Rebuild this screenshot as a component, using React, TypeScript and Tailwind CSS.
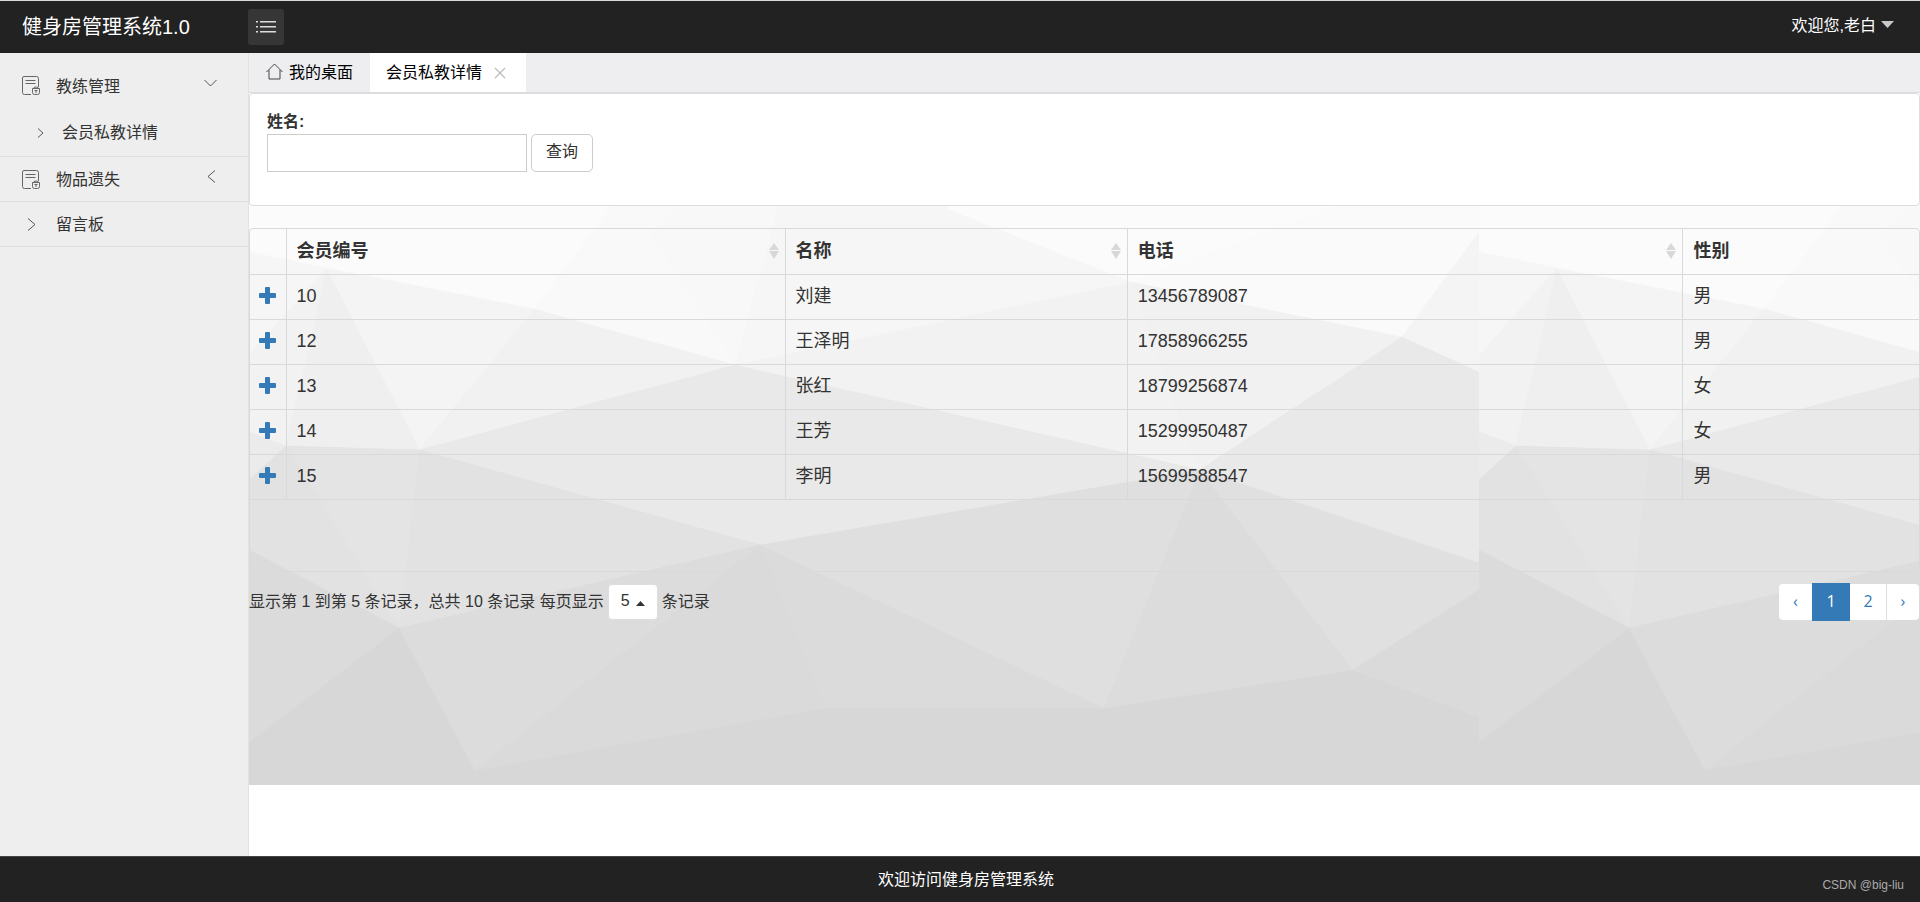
import { useState } from "react";

type Member = {
  id: number;
  name: string;
  phone: string;
  gender: string;
};

const members: Member[] = [
  { id: 10, name: "刘建", phone: "13456789087", gender: "男" },
  { id: 12, name: "王泽明", phone: "17858966255", gender: "男" },
  { id: 13, name: "张红", phone: "18799256874", gender: "女" },
  { id: 14, name: "王芳", phone: "15299950487", gender: "女" },
  { id: 15, name: "李明", phone: "15699588547", gender: "男" },
];

export default function App() {
  const [name, setName] = useState("");
  const [pageSize, setPageSize] = useState("5");

  return (
    <div className="flex min-h-screen flex-col bg-white font-['Liberation_Sans','Noto_Sans_CJK_SC',sans-serif] text-base leading-6 text-[#333]">
      <header className="flex h-[53px] items-center border-t border-[#d5dcd9] bg-[#222] text-white">
        <h1 className="w-[248px] shrink-0 pl-[22px] text-xl">健身房管理系统1.0</h1>
        <button
          aria-label="切换菜单"
          className="flex size-9 items-center justify-center rounded-[3px] bg-[#363636]"
        >
          <svg width="20" height="12" viewBox="0 0 20 12" fill="#ddd">
            <path d="M0 0h2v1.5H0zM4 0h16v1.5H4zM0 5h2v1.5H0zM4 5h16v1.5H4zM0 10h2v1.5H0zM4 10h16v1.5H4z" />
          </svg>
        </button>
        <button className="mr-[26px] ml-auto flex items-center gap-[5px] pb-0.5">
          欢迎您,老白
          <svg width="13" height="7" viewBox="0 0 13 7" className="mb-1" fill="#c8c8c8">
            <path d="M0 0h13L6.500 7z" />
          </svg>
        </button>
      </header>

      <div className="flex flex-1">
        <Sidebar />

        <main className="relative flex min-w-0 flex-1 flex-col">
          <Backdrop />

          <div className="relative flex h-10 shrink-0 border-b border-[#ddd] bg-[#eeeef0] text-black">
            <a href="#home" className="flex items-center gap-1.5 px-[17px]">
              <svg width="17" height="17" viewBox="0 0 17 17" className="mb-0.5" fill="none" stroke="#444">
                <path d="M0.500 9L8.500 1l8 8M3 7v9h11V7" />
              </svg>
              <span>我的桌面</span>
            </a>
            <div className="flex items-center gap-3 bg-white pr-5 pl-4">
              <a href="#private">会员私教详情</a>
              <button aria-label="关闭">
                <svg width="12" height="12" viewBox="0 0 12 12" stroke="#bbb" strokeWidth="1.200">
                  <path d="M1 1l10 10M11 1L1 11" />
                </svg>
              </button>
            </div>
          </div>

          <form
            className="relative rounded border border-[#ddd] bg-white px-[17px] pt-4 pb-[33px]"
            onSubmit={(e) => e.preventDefault()}
          >
            <label htmlFor="name" className="block font-bold">
              姓名:
            </label>
            <div className="flex gap-1">
              <input
                id="name"
                value={name}
                onChange={(e) => setName(e.target.value)}
                className="h-[38px] w-[260px] border border-[#ccc] bg-white px-2 outline-none"
              />
              <button className="h-[38px] rounded-[5px] border border-[#ccc] bg-white px-3.5 pb-0.5">
                查询
              </button>
            </div>
          </form>

          <div className="relative mt-[22px] rounded border border-[#d9d9d9] pb-[71px] text-lg">
            <table className="w-full table-fixed border-collapse">
              <colgroup>
                <col className="w-9" />
                <col className="w-[29.900%]" />
                <col className="w-[20.500%]" />
                <col className="w-[33.300%]" />
                <col />
              </colgroup>
              <thead>
                <tr className="h-[45px] border-b border-[#d9d9d9]">
                  <th className="border-r border-[#d9d9d9]" />
                  <HeadCell title="会员编号" sortable />
                  <HeadCell title="名称" sortable />
                  <HeadCell title="电话" sortable />
                  <HeadCell title="性别" />
                </tr>
              </thead>
              <tbody>
                {members.map((m) => (
                  <tr key={m.id} className="h-[45px] border-b border-[#d9d9d9]">
                    <td className="border-r border-[#d9d9d9] pb-0.5">
                      <button aria-label="展开" className="mx-auto block">
                        <svg width="17" height="17" viewBox="0 0 17 17" fill="#337ab7">
                          <path d="M7 0h3q1 0 1 1v5h5q1 0 1 1v3q0 1-1 1h-5v5q0 1-1 1H7q-1 0-1-1v-5H1q-1 0-1-1V7q0-1 1-1h5V1q0-1 1-1z" />
                        </svg>
                      </button>
                    </td>
                    <td className="border-r border-[#d9d9d9] px-2.5 pb-0.5">{m.id}</td>
                    <td className="border-r border-[#d9d9d9] px-2.5 pb-0.5">{m.name}</td>
                    <td className="border-r border-[#d9d9d9] px-2.5 pb-0.5">{m.phone}</td>
                    <td className="px-2.5 pb-0.5">{m.gender}</td>
                  </tr>
                ))}
              </tbody>
            </table>
          </div>

          <div className="relative mt-[11px] flex items-center justify-between">
            <div className="flex items-center">
              <span className="whitespace-pre">显示第 1 到第 5 条记录，总共 10 条记录 </span>
              <label htmlFor="page-size">每页显示</label>
              <span className="relative mx-1 flex">
                <select
                  id="page-size"
                  value={pageSize}
                  onChange={(e) => setPageSize(e.target.value)}
                  className="h-9 w-[50px] appearance-none rounded border border-[#ddd] bg-white pb-0.5 pl-3"
                >
                  <option>5</option>
                  <option>10</option>
                  <option>20</option>
                </select>
                <svg
                  width="9"
                  height="5"
                  viewBox="0 0 9 5"
                  className="pointer-events-none absolute top-[17px] right-[13px]"
                  fill="#333"
                >
                  <path d="M0 5h9L4.500 0z" />
                </svg>
              </span>
              <span>条记录</span>
            </div>

            <nav className="flex items-center font-['Open_Sans',sans-serif] text-[#337ab7]">
              <a href="#prev" className="flex h-9 w-[33px] items-center justify-center rounded-l bg-white pb-0.5">
                ‹
              </a>
              <a href="#1" className="flex h-[38px] w-[38px] items-center justify-center bg-[#337ab7] pb-0.5 text-white">
                1
              </a>
              <a href="#2" className="flex h-9 w-9 items-center justify-center bg-white pb-0.5">
                2
              </a>
              <a
                href="#next"
                className="mr-px flex h-9 w-[33px] items-center justify-center rounded-r border-l border-[#ddd] bg-white pb-0.5"
              >
                ›
              </a>
            </nav>
          </div>
        </main>
      </div>

      <footer className="relative flex h-[46px] items-center justify-center border-t border-[#444] bg-[#222] pl-3 text-white">
        欢迎访问健身房管理系统
        <span className="absolute right-4 bottom-[7px] text-xs leading-5 text-[#aaa]">CSDN @big-liu</span>
      </footer>
    </div>
  );
}

function Sidebar() {
  return (
    <nav className="w-[249px] shrink-0 border-r border-[#e2e2e2] bg-[#eee] pt-[11px]">
      <a href="#coach" className="flex h-[45px] items-center pr-[31px] pl-[22px]">
        <DocIcon />
        <span className="ml-4 flex-1">教练管理</span>
        <svg width="13" height="8" viewBox="0 0 13 8" className="mb-2" fill="none" stroke="#555">
          <path d="M0.500 1l6 6 6-6" />
        </svg>
      </a>
      <a href="#private" className="flex h-12 items-center border-b border-[#e0e0e0] pl-[37px]">
        <svg width="7" height="10" viewBox="0 0 7 10" fill="none" stroke="#555">
          <path d="M1 0.500L6 5 1 9.500" />
        </svg>
        <span className="ml-[18px]">会员私教详情</span>
      </a>
      <a href="#lost" className="flex h-[45px] items-center border-b border-[#e0e0e0] pt-0.5 pr-8 pl-[22px]">
        <DocIcon />
        <span className="ml-4 flex-1">物品遗失</span>
        <svg width="9" height="13" viewBox="0 0 9 13" className="mb-2" fill="none" stroke="#555">
          <path d="M8 0.500l-7 6 7 6" />
        </svg>
      </a>
      <a href="#board" className="flex h-[45px] items-center border-b border-[#e0e0e0] pt-0.5 pl-[27px]">
        <svg width="9" height="13" viewBox="0 0 9 13" className="mb-0.5" fill="none" stroke="#555">
          <path d="M1 0.500l7 6-7 6" />
        </svg>
        <span className="ml-5">留言板</span>
      </a>
    </nav>
  );
}

function HeadCell({ title, sortable }: { title: string; sortable?: boolean }) {
  return (
    <th className="border-r border-[#d9d9d9] pr-1.5 pl-2.5 text-left last:border-r-0">
      <div className="flex items-center justify-between">
        {title}
        {sortable && (
          <svg width="10" height="16" viewBox="0 0 10 16" fill="#d8d8d8">
            <path d="M5 0l5 7H0zM0 8h10l-5 8z" />
          </svg>
        )}
      </div>
    </th>
  );
}

function DocIcon() {
  return (
    <svg width="18" height="19" viewBox="0 0 18 19" className="mb-0.5" fill="none" stroke="#666">
      <path d="M9 18.500H2.500q-2 0-2-2V2q0-1.500 1.500-1.500h12.500Q16.500.500 16.500 2.500V11M3.500 4.500h10M3.500 7.500h10" />
      <path d="M10.500 12.500h7v4q0 2-2 2h-3q-2 0-2-2zM12 12.500v-1q2-1 4 0v1M12.500 14.500h3M14 14.500v2.500" />
    </svg>
  );
}

// Low-poly facets, repeated horizontally every 1230px
const facets: [string, string][] = [
  ["0,0 450,0 285,216 78,175 0,159", "#fbfbfb"],
  ["450,0 560,0 700,117 882,189 486,272 285,216", "#f9f9f9"],
  ["560,0 700,117 486,272 400,140", "#f8f8f8"],
  ["560,0 700,117 882,189 486,272", "#f6f6f6"],
  ["882,189 1230,60 1230,139 1153,244", "#fafafa"],
  ["1153,244 1230,139 1230,279", "#f4f4f4"],
  ["0,159 78,175 0,262", "#f6f6f6"],
  ["0,262 78,175 37,353 0,339", "#f2f2f2"],
  ["78,175 171,357 37,353", "#efefef"],
  ["78,175 285,216 171,357", "#f4f4f4"],
  ["285,216 486,272 171,357", "#f1f1f1"],
  ["486,272 882,189 951,377", "#f2f2f2"],
  ["882,189 1153,244 951,377", "#f1f1f1"],
  ["486,272 951,377 511,452 171,357", "#e9e9e9"],
  ["1153,244 1230,279 1230,470 951,377", "#e9e9e9"],
  ["0,339 37,353 0,387", "#ebebeb"],
  ["0,387 37,353 150,535 0,457", "#e2e2e2"],
  ["37,353 171,357 150,535", "#e4e4e4"],
  ["171,357 511,452 150,535", "#e2e2e2"],
  ["0,457 150,535 0,649", "#dbdbdb"],
  ["150,535 511,452 226,677", "#dcdcdc"],
  ["511,452 576,615 226,677", "#dadada"],
  ["511,452 855,615 576,615", "#dbdbdb"],
  ["511,452 951,377 855,615", "#dfdfdf"],
  ["951,377 1104,577 855,615", "#dcdcdc"],
  ["951,377 1230,470 1230,497 1104,577", "#e0e0e0"],
  ["1104,577 1230,497 1230,624", "#dadada"],
];

function Backdrop() {
  return (
    <svg className="absolute inset-x-0 top-10 h-[692px] w-full" aria-hidden="true">
      <pattern id="facets" width="1230" height="692" patternUnits="userSpaceOnUse">
        <rect width="1230" height="692" fill="#d7d7d7" />
        <rect width="1230" height="300" fill="#fbfbfb" />
        {facets.map(([points, fill]) => (
          <polygon key={points} points={points} fill={fill} stroke={fill} strokeWidth="0.500" />
        ))}
      </pattern>
      <rect width="100%" height="692" fill="url(#facets)" />
    </svg>
  );
}
